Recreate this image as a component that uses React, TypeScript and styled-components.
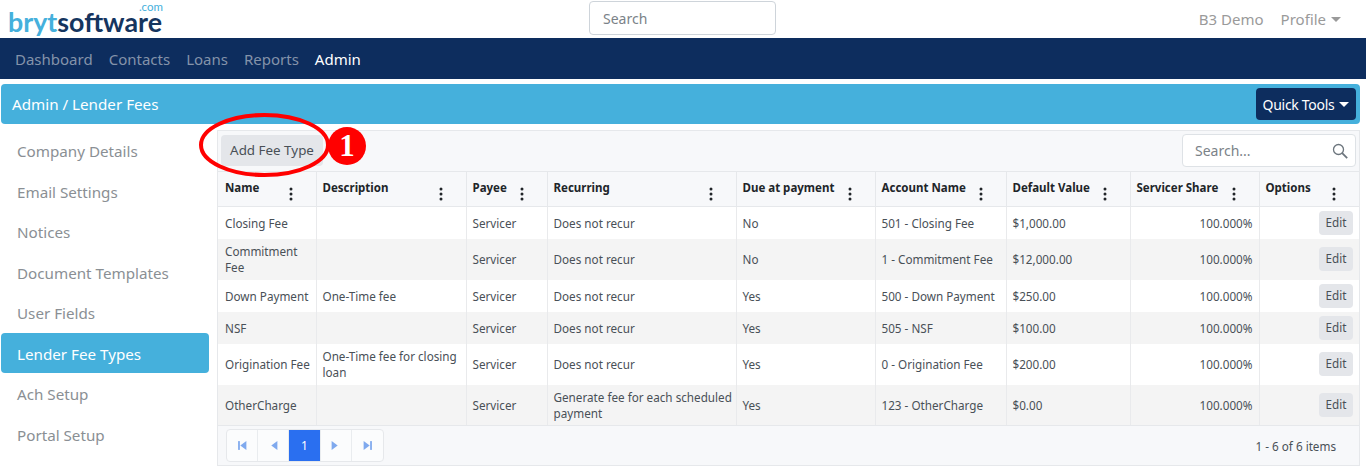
import React from "react";
import styled, { createGlobalStyle } from "styled-components";

const Global = createGlobalStyle`
  html, body { margin: 0; padding: 0; background: #fff; }
  body { font-family: "Noto Sans", "Open Sans", sans-serif; color: #495057; overflow: hidden; }
  * { box-sizing: border-box; }
`;
const Page = styled.div`
  position: relative; width: 1366px; height: 472px; overflow: hidden; background: #fff;
`;
const Header = styled.header`
  height: 38px; display: grid; grid-template-columns: 581px 187px 1fr; align-items: center;
  padding: 0 25px 0 8px;
`;
const Logo = styled.div`
  width: 155px; display: flex; flex-direction: column; font-family: "Lato", sans-serif; font-weight: 700;
  font-size: 26.8px; white-space: nowrap; margin-top: -3px;
`;
const LogoWord = styled.div` line-height: 22px; height: 22px; `;
const LogoLight = styled.span` color: #45b0dc; `;
const LogoDark = styled.span` color: #15355f; `;
const LogoCom = styled.span`
  align-self: flex-end; font-size: 11.5px; line-height: 9px; height: 9px; color: #45b0dc; font-weight: 400;
`;
const TopSearch = styled.div`
  height: 34px; margin-top: -2px; border: 1px solid #ced4da; border-radius: 4px; padding: 0 13px;
  font-size: 14px; line-height: 34px; color: #7b8288; background: #fff;
`;
const TopLinks = styled.div`
  display: flex; justify-content: flex-end; gap: 17px; font-size: 15px; color: #9a9a9a;
`;
const Caret = styled.span<{ $color: string }>`
  display: inline-block; margin-left: 5px; vertical-align: 3px; border-top: 5px solid ${p => p.$color};
  border-left: 5px solid transparent; border-right: 5px solid transparent;
`;
const Nav = styled.nav`
  height: 41px; background: #0d2d5e; display: flex; align-items: center; gap: 16px; padding: 0 15px;
  font-size: 15px; margin-bottom: 5px;
`;
const NavLink = styled.span<{ $active?: boolean }>`
  color: ${p => (p.$active ? "#fff" : "#8493aa")};
`;
const TitleBar = styled.div`
  height: 40px; margin: 0 6px 0 1px; background: #45b0dc; border-radius: 4px; display: flex;
  align-items: center; justify-content: space-between; padding: 0 4px 0 11px; color: #fff; font-size: 15.2px;
`;
const QuickTools = styled.div`
  width: 100px; height: 32px; background: #0d2d5e; border-radius: 4px; font-size: 14px; letter-spacing: -0.3px; color: #fff;
  display: flex; align-items: center; justify-content: center; white-space: nowrap;
`;
const Body = styled.div`
  display: flex; margin-top: 6px; align-items: flex-start;
`;
const Side = styled.aside`
  width: 217px; padding: 0 8px 0 1px; flex: none;
`;
const SideItem = styled.div<{ $active?: boolean }>`
  height: 40.5px; line-height: 42px; padding-left: 16px; border-radius: 4px; font-size: 15.2px;
  color: ${p => (p.$active ? "#fff" : "#8a8f94")}; background: ${p => (p.$active ? "#45b0dc" : "transparent")};
`;
const Panel = styled.section`
  width: 1143px; height: 336px; border: 1px solid #e6e8eb; background: #f7f8fa; display: flex; flex-direction: column;
`;
const Toolbar = styled.div`
  height: 40px; flex: none; display: flex; align-items: center; justify-content: space-between; padding: 0 3px 1px;
`;
const AddBtn = styled.div`
  width: 102px; height: 31px; background: #e4e6ea; border-radius: 4px; color: #495057; font-size: 13.4px;
  line-height: 31px; text-align: center; white-space: nowrap;
`;
const GridSearch = styled.div`
  width: 174px; height: 33px; background: #fff; border: 1px solid #dee2e6; border-radius: 4px; display: flex;
  align-items: center; justify-content: space-between; padding: 0 6px 0 12px; font-size: 14px; color: #7b8288;
`;
const Table = styled.table`
  width: 1141px; flex: none; border-collapse: collapse; table-layout: fixed; font-size: 11.7px; line-height: 16.4px; background: #fff;
`;
const Th = styled.th<{ $w: number }>`
  width: ${p => p.$w}px; height: 35px; padding: 0 6px; border: 1px solid #e6e8eb;
  background: #f7f8fa; color: #212529; font-size: 11.5px; font-weight: 700; text-align: left; vertical-align: top;
  &:first-child { border-left: 0; padding-left: 7px; } &:last-child { border-right: 0; }
`;
const ThInner = styled.div`
  display: flex; justify-content: space-between; padding-top: 8px; white-space: nowrap;
`;
const Kebab = styled.svg`
  flex: none; width: 4px; height: 14px; margin: 7px 17px 0 0;
`;
const Tr = styled.tr<{ $odd: boolean }>`
  background: ${p => (p.$odd ? "#fff" : "#f4f4f4")};
`;
const Td = styled.td<{ $right?: boolean; $flush?: boolean }>`
  padding: 4px ${p => (p.$flush ? "0" : "6px")} 4px 6px;
  border-left: 1px solid #e9eaec; color: #495057; vertical-align: middle;
  text-align: ${p => (p.$right ? "right" : "left")};
  &:first-child { border-left: 0; padding-left: 7px; padding-right: 5px; }
`;
const EditBtn = styled.span`
  display: inline-block; width: 34px; height: 24px; line-height: 23px; text-align: center; background: #e4e6ea;
  border-radius: 4px; color: #495057;
`;
const Footer = styled.div`
  flex: 1; border-top: 1px solid #e6e8eb; display: flex; align-items: center; justify-content: space-between;
  padding: 0 23px 0 8px;
`;
const Pager = styled.div`
  display: flex; height: 33px; border: 1px solid #e6e8eb; border-radius: 4px; background: #fbfcfd;
`;
const PageBtn = styled.div<{ $active?: boolean }>`
  width: 31.2px; display: flex; align-items: center; justify-content: center; font-size: 12px;
  color: #fff; background: ${p => (p.$active ? "#2a6ff0" : "transparent")};
  border-right: 1px solid #e9ecef;
  &:last-child { border-right: 0; }
`;
const Count = styled.div` font-size: 11.7px; color: #495057; `;
const Annotation = styled.svg`
  position: absolute; left: 195px; top: 108px; width: 180px; height: 80px; pointer-events: none;
`;
const Num = styled.div`
  position: absolute; left: 328px; top: 127px; width: 38px; height: 38px; border-radius: 50%; background: #f00;
  color: #fff; font: 700 31px/37px "Liberation Serif", serif; text-align: center;
`;

const cols = [
  ["Name", 98], ["Description", 150], ["Payee", 81], ["Recurring", 189], ["Due at payment", 139],
  ["Account Name", 131], ["Default Value", 124], ["Servicer Share", 129], ["Options", 100],
] as const;
const rows = [
  ["Closing Fee", "", "Servicer", "Does not recur", "No", "501 - Closing Fee", "$1,000.00"],
  ["Commitment Fee", "", "Servicer", "Does not recur", "No", "1 - Commitment Fee", "$12,000.00"],
  ["Down Payment", "One-Time fee", "Servicer", "Does not recur", "Yes", "500 - Down Payment", "$250.00"],
  ["NSF", "", "Servicer", "Does not recur", "Yes", "505 - NSF", "$100.00"],
  ["Origination Fee", "One-Time fee for closing loan", "Servicer", "Does not recur", "Yes", "0 - Origination Fee", "$200.00"],
  ["OtherCharge", "", "Servicer", "Generate fee for each scheduled payment", "Yes", "123 - OtherCharge", "$0.00"],
];
const Arrow = ({ d, bar }: { d: "l" | "r"; bar?: boolean }) => (
  <svg width="11" height="11" viewBox="0 0 10 10" fill="#7fa9ee">
    {d === "l" ? <path d="M8.5 1v8L3 5z" /> : <path d="M1.5 1v8L7 5z" />}
    {bar && (d === "l" ? <rect x="1" y="1" width="1.6" height="8" /> : <rect x="7.4" y="1" width="1.6" height="8" />)}
  </svg>
);

export default function App() {
  return (
    <Page>
      <Global />
      <Header>
        <Logo>
          <LogoCom>.com</LogoCom>
          <LogoWord><LogoLight>bryt</LogoLight><LogoDark>software</LogoDark></LogoWord>
        </Logo>
        <TopSearch>Search</TopSearch>
        <TopLinks><span>B3 Demo</span><span>Profile<Caret $color="#9a9a9a" /></span></TopLinks>
      </Header>
      <Nav>
        {["Dashboard", "Contacts", "Loans", "Reports"].map(n => <NavLink key={n}>{n}</NavLink>)}
        <NavLink $active>Admin</NavLink>
      </Nav>
      <TitleBar>
        <span>Admin / Lender Fees</span>
        <QuickTools>Quick Tools<Caret $color="#fff" /></QuickTools>
      </TitleBar>
      <Body>
        <Side>
          {["Company Details", "Email Settings", "Notices", "Document Templates", "User Fields", "Lender Fee Types", "Ach Setup", "Portal Setup"].map(s => (
            <SideItem key={s} $active={s === "Lender Fee Types"}>{s}</SideItem>
          ))}
        </Side>
        <Panel>
          <Toolbar>
            <AddBtn>Add Fee Type</AddBtn>
            <GridSearch>
              <span>Search...</span>
              <svg width="18" height="18" viewBox="0 0 18 18" fill="none" stroke="#6c757d" strokeWidth="1.3">
                <circle cx="7.5" cy="7.5" r="5" /><path d="M11.2 11.2l5 5" strokeWidth="1.8" />
              </svg>
            </GridSearch>
          </Toolbar>
          <Table>
            <thead>
              <tr>
                {cols.map(([c, w]) => (
                  <Th key={c} $w={w}>
                    <ThInner>
                      <span>{c}</span>
                      <Kebab viewBox="0 0 4 14" fill="#212529"><circle cx="2" cy="2" r="1.5" /><circle cx="2" cy="7" r="1.5" /><circle cx="2" cy="12" r="1.5" /></Kebab>
                    </ThInner>
                  </Th>
                ))}
              </tr>
            </thead>
            <tbody>
              {rows.map((r, i) => (
                <Tr key={r[0]} $odd={i % 2 === 0}>
                  {r.map((c, j) => <Td key={j} $flush={j === 3}>{c}</Td>)}
                  <Td $right>100.000%</Td>
                  <Td $right><EditBtn>Edit</EditBtn></Td>
                </Tr>
              ))}
            </tbody>
          </Table>
          <Footer>
            <Pager>
              <PageBtn><Arrow d="l" bar /></PageBtn>
              <PageBtn><Arrow d="l" /></PageBtn>
              <PageBtn $active>1</PageBtn>
              <PageBtn><Arrow d="r" /></PageBtn>
              <PageBtn><Arrow d="r" bar /></PageBtn>
            </Pager>
            <Count>1 - 6 of 6 items</Count>
          </Footer>
        </Panel>
      </Body>
      <Annotation viewBox="0 0 180 80">
        <ellipse cx="69.5" cy="37" rx="63.5" ry="30" fill="none" stroke="#f00" strokeWidth="4" />
      </Annotation>
      <Num>1</Num>
    </Page>
  );
}
